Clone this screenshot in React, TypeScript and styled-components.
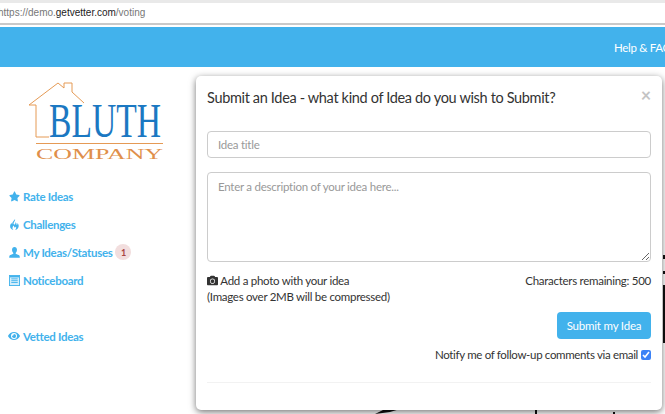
import styled, { createGlobalStyle } from "styled-components";
import { FaCamera, FaEye, FaStar } from "react-icons/fa";

const blue = "#42b2ec";

const GlobalStyle = createGlobalStyle`
  html, body {
    margin: 0;
    padding: 0;
    background: #fff;
  }
  * {
    box-sizing: border-box;
  }
`;

function FireIcon() {
  return (
    <svg viewBox="0 0 12 12" width="11" height="11" fill="currentColor">
      <path d="M6.6 0 C7.2 1.8 5.2 3 5 4.6 C4.9 5.6 5.6 6.3 6.3 6 C7.2 5.6 7 4.4 6.8 3.6 C8.2 4.4 8.4 5.6 8.3 6.6 C9.2 6.2 9.4 5.2 9.2 4.4 C10.6 5.8 11 7.6 10.2 9.2 C9.5 10.6 8.2 11.6 6.6 12 C7.8 10.8 8.2 9.6 7.5 8.2 C7.2 9 6.6 9.4 6 9.2 C5.6 8.4 5.3 7.8 4.4 7.2 C4.6 8.6 3.6 9.4 3.8 10.4 C3.9 11 4.3 11.6 4.8 12 C2.6 11.4 1 9.8 1.2 7.6 C1.3 6.2 2 5.2 2.8 4.2 C2.8 5 3 5.6 3.4 5.8 C3.2 3.4 5.4 2 6.6 0 Z" />
    </svg>
  );
}

function UserIcon() {
  return (
    <svg viewBox="0 0 12 12" width="11" height="11" fill="currentColor">
      <path d="M6 0 C7.7 0 8.7 1.3 8.7 3.1 C8.7 4.7 8 5.9 7.3 6.5 L7.3 7.4 C8.6 8 11.2 8.7 11.6 9.8 L11.8 11.6 H0.2 L0.4 9.8 C0.8 8.7 3.4 8 4.7 7.4 L4.7 6.5 C4 5.9 3.3 4.7 3.3 3.1 C3.3 1.3 4.3 0 6 0 Z" />
    </svg>
  );
}

function BoardIcon() {
  return (
    <svg viewBox="0 0 12 12" width="11" height="11">
      <rect x="0.5" y="0.5" width="11" height="11" fill="#d5eefb" stroke="currentColor" />
      <rect x="1" y="1" width="10" height="1.6" fill="currentColor" />
      <path d="M2.5 4.2 H9.5 M2.5 6.2 H9.5 M2.5 8.2 H9.5" stroke="currentColor" strokeWidth="1" />
    </svg>
  );
}

const navItems = [
  { icon: <FaStar size={11} />, label: "Rate Ideas" },
  { icon: <FireIcon />, label: "Challenges" },
  { icon: <UserIcon />, label: "My Ideas/Statuses", badge: 1 },
  { icon: <BoardIcon />, label: "Noticeboard" },
];

function Logo() {
  return (
    <LogoSvg viewBox="0 0 136 78" width="136" height="78">
      <path
        d="M21 55 H8 V23 H1 L30 1 L36 6 V1 H44 V10 L56 21"
        fill="none"
        stroke="#e59a55"
        strokeWidth="1"
      />
      <text
        x="21"
        y="55"
        fontFamily="Liberation Serif"
        fontSize="48"
        fill="#1b78c2"
        textLength="112"
        lengthAdjust="spacingAndGlyphs"
      >
        BLUTH
      </text>
      <rect x="8" y="61" width="127" height="1" fill="#e59a55" />
      <text
        x="8"
        y="77"
        fontFamily="Liberation Serif"
        fontSize="15"
        fill="#e08f4b"
        textLength="127"
        lengthAdjust="spacingAndGlyphs"
      >
        COMPANY
      </text>
    </LogoSvg>
  );
}

export default function App() {
  return (
    <Page>
      <GlobalStyle />
      <AddressBar>
        <Url>
          https://demo.<strong>getvetter.com</strong>/voting
        </Url>
      </AddressBar>
      <TopBar>
        <HelpLink>Help &amp; FAQ</HelpLink>
      </TopBar>
      <Body>
        <Sidebar>
          <Logo />
          <Nav>
            {navItems.map((item) => (
              <NavItem key={item.label}>
                <NavIcon>{item.icon}</NavIcon>
                {item.label}
                {item.badge && <Badge>{item.badge}</Badge>}
              </NavItem>
            ))}
            <NavItem $spaced>
              <NavIcon>
                <FaEye size={12} />
              </NavIcon>
              Vetted Ideas
            </NavItem>
          </Nav>
        </Sidebar>
      </Body>
      <BehindWedge />
      <BehindMark $left={535} $top={410} $width={2} $height={4} />
      <BehindMark $left={613} $top={412} $width={2} $height={2} />
      <BehindMark $left={663} $top={285} $width={2} $height={58} />
      <BehindMark $left={663} $top={255} $width={2} $height={4} />
      <BehindMark $left={663} $top={271} $width={2} $height={3} />
      <Modal>
        <ModalHeader>
          <Title>Submit an Idea - what kind of Idea do you wish to Submit?</Title>
          <CloseButton>×</CloseButton>
        </ModalHeader>
        <TitleInput placeholder="Idea title" />
        <DescriptionInput placeholder="Enter a description of your idea here..." />
        <MetaRow>
          <PhotoNote>
            <FaCamera size={11} /> Add a photo with your idea
            <br />
            (Images over 2MB will be compressed)
          </PhotoNote>
          <span>Characters remaining: 500</span>
        </MetaRow>
        <Actions>
          <SubmitButton>Submit my Idea</SubmitButton>
          <NotifyLabel>
            Notify me of follow-up comments via email
            <Checkbox type="checkbox" defaultChecked />
          </NotifyLabel>
        </Actions>
        <Divider />
      </Modal>
    </Page>
  );
}

const Page = styled.div`
  position: relative;
  width: 665px;
  height: 414px;
  overflow: hidden;
  font-family: Lato, "Liberation Sans", sans-serif;
  color: #333;
`;

const AddressBar = styled.div`
  height: 25px;
  padding: 3px 0 0;
  background: #e9e9e9;
  border-bottom: 2px solid #c9c9c9;
`;

const Url = styled.div`
  height: 20px;
  margin-left: -2px;
  background: #fff;
  font-family: "Liberation Sans", sans-serif;
  font-size: 10px;
  line-height: 20px;
  color: #777;

  strong {
    font-weight: 400;
    color: #222;
  }
`;

const TopBar = styled.div`
  display: flex;
  justify-content: flex-end;
  align-items: center;
  height: 40px;
  margin-top: 2px;
  background: ${blue};
`;

const HelpLink = styled.a`
  margin-right: -14px;
  width: 65px;
  color: #fff;
  font-size: 11.5px;
  letter-spacing: -0.3px;
  white-space: nowrap;
`;

const Body = styled.div`
  display: flex;
`;

const Sidebar = styled.aside`
  width: 190px;
  padding: 15px 0 0 8px;
`;

const LogoSvg = styled.svg`
  display: block;
  margin-left: 20px;
  overflow: visible;
`;

const Nav = styled.nav`
  display: flex;
  flex-direction: column;
  margin-top: 22px;
`;

const NavItem = styled.a<{ $spaced?: boolean }>`
  display: flex;
  align-items: center;
  height: 28px;
  margin-top: ${(p) => (p.$spaced ? "28px" : "0")};
  color: ${blue};
  font-size: 11.5px;
  font-weight: 700;
  letter-spacing: -0.3px;
`;

const NavIcon = styled.span`
  display: flex;
  justify-content: center;
  width: 12px;
  margin-right: 3px;
`;

const Badge = styled.span`
  display: flex;
  align-items: center;
  justify-content: center;
  width: 16px;
  height: 16px;
  margin-left: 3px;
  border-radius: 8px;
  background: #f2dede;
  color: #a94442;
  font-size: 9px;
`;

const BehindWedge = styled.div`
  position: absolute;
  left: 375px;
  top: 409px;
  width: 25px;
  height: 5px;
  background: #111;
  clip-path: polygon(40% 0, 100% 0, 60% 60%, 0 100%);
`;

const BehindMark = styled.div<{
  $left: number;
  $top: number;
  $width: number;
  $height: number;
}>`
  position: absolute;
  left: ${(p) => p.$left}px;
  top: ${(p) => p.$top}px;
  width: ${(p) => p.$width}px;
  height: ${(p) => p.$height}px;
  background: #111;
`;

const Modal = styled.div`
  position: absolute;
  left: 196px;
  top: 76px;
  width: 466px;
  height: 334px;
  padding: 0 11px;
  background: #fff;
  border-radius: 5px;
  box-shadow: 0 2px 7px rgba(0, 0, 0, 0.55);
  font-size: 11.5px;
  letter-spacing: -0.28px;
`;

const ModalHeader = styled.div`
  position: relative;
  height: 55px;
  padding-top: 12px;
`;

const Title = styled.h4`
  margin: 0;
  font-size: 14.5px;
  font-weight: 400;
  line-height: 20px;
  letter-spacing: -0.34px;
  color: #333;
`;

const CloseButton = styled.span`
  position: absolute;
  right: 0;
  top: 9px;
  color: #c4c4c4;
  font-size: 18px;
  font-weight: 700;
  line-height: 20px;
`;

const fieldStyles = `
  display: block;
  width: 100%;
  padding: 6px 10px;
  border: 1px solid #ccc;
  border-radius: 4px;
  font-family: Lato, "Liberation Sans", sans-serif;
  font-size: 11.5px;
  letter-spacing: -0.25px;
  color: #333;
  outline: none;
  &::placeholder {
    color: #999;
    opacity: 1;
  }
`;

const TitleInput = styled.input`
  ${fieldStyles}
  height: 27px;
`;

const DescriptionInput = styled.textarea`
  ${fieldStyles}
  height: 90px;
  margin-top: 14px;
  padding-top: 7px;
`;

const MetaRow = styled.div`
  display: flex;
  justify-content: space-between;
  margin-top: 11px;
  line-height: 16px;
`;

const PhotoNote = styled.div`
  svg {
    vertical-align: -1px;
  }
`;

const Actions = styled.div`
  display: flex;
  flex-direction: column;
  align-items: flex-end;
  margin-top: 7px;
`;

const SubmitButton = styled.button`
  width: 94px;
  height: 27px;
  border: 0;
  border-radius: 4px;
  background: ${blue};
  color: #fff;
  font-family: inherit;
  font-size: 11.5px;
  letter-spacing: -0.2px;
`;

const NotifyLabel = styled.label`
  display: flex;
  align-items: center;
  margin-top: 8px;
  line-height: 16px;
  letter-spacing: -0.33px;
`;

const Checkbox = styled.input`
  width: 10px;
  height: 10px;
  margin: 0 0 0 3px;
  accent-color: #3b82f6;
`;

const Divider = styled.div`
  height: 1px;
  margin-top: 19px;
  background: #f2f2f2;
`;
